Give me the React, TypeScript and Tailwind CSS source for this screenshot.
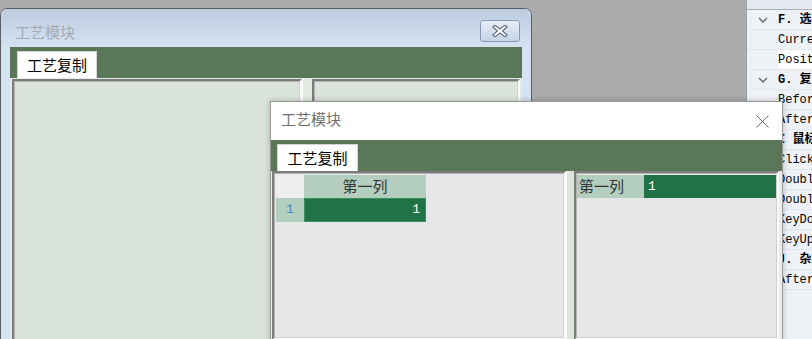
import React from 'react';

const cjk = { fontFamily: '"Noto Sans CJK SC", "Noto Sans", sans-serif' };
const mono = { fontFamily: '"Liberation Mono", "Noto Sans CJK SC", monospace' };

type PropRow = { label: string; group?: boolean; chevron?: boolean; white?: boolean };

const propRows: PropRow[] = [
    { label: 'F. 选择', group: true, chevron: true },
    { label: 'CurrentCell' },
    { label: 'Position', white: true },
    { label: 'G. 复制', group: true, chevron: true },
    { label: 'BeforeCopy' },
    { label: 'AfterCopy' },
    { label: 'I 鼠标', group: true, chevron: true },
    { label: 'Click' },
    { label: 'DoubleClick' },
    { label: 'DoubleClickCell' },
    { label: 'KeyDown' },
    { label: 'KeyUp' },
    { label: 'J. 杂项', group: true, chevron: true },
    { label: 'AfterEdit' },
];

const Chevron = () => (
    <svg width="10" height="6" viewBox="0 0 10 6">
        <path d="M1 1 L5 5 L9 1" fill="none" stroke="#5f6670" strokeWidth="1.4" />
    </svg>
);

const PropertyGrid = () => (
    <div className="absolute left-[746px] top-0 w-[66px] h-[339px] bg-[#eef2f7] border-l border-[#9aa0a8] flex flex-col overflow-hidden">
        <div className="h-[10px] shrink-0 border-b border-[#a9b1bc] bg-[#e4e9f0]" />
        {propRows.map((r, i) => (
            <div key={i} className={`h-5 shrink-0 flex items-center border-b border-[#e2e7ee] overflow-hidden ${r.white ? 'bg-white' : ''}`}>
                <div className="w-[31px] shrink-0 h-full flex items-center justify-center bg-[#eef2f7]">
                    {r.chevron && <Chevron />}
                </div>
                <span
                    className={`text-[12px] text-black whitespace-nowrap ${r.group ? 'font-bold' : ''}`}
                    style={mono}
                >
                    {r.label}
                </span>
            </div>
        ))}
    </div>
);

const SunkenPanel = ({ className, children }: { className: string; children?: React.ReactNode }) => (
    <div className={`border-2 border-t-[#7c7c7c] border-l-[#7c7c7c] border-r-[#fafafa] border-b-[#fafafa] ${className}`}>
        <div className="h-full border border-t-[#b4b4b4] border-l-[#b4b4b4] border-r-[#d0d0d0] border-b-[#d0d0d0]">
            {children}
        </div>
    </div>
);

const BackWindow = () => (
    <div className="absolute left-0 top-[8px] w-[532px] h-[345px] rounded-t-[7px] border border-[#5a5f66] bg-[#d6e3f3] flex flex-col overflow-hidden">
        <div className="h-[38px] shrink-0 bg-gradient-to-b from-[#bccbdf] to-[#d5e2f2] flex items-center justify-between pl-[14px] pr-[11px]">
            <span className="text-[15px] text-[#a3aab3] mt-[8px]" style={cjk}>工艺模块</span>
            <div className="w-[40px] h-[22px] rounded-[3px] border border-[#8899b3] bg-gradient-to-b from-[#e8eef7] to-[#c5d3e6] flex items-center justify-center mt-[5px]">
                <svg width="16" height="12" viewBox="0 0 16 12">
                    <path d="M3 2 L13 10 M13 2 L3 10" stroke="#44536a" strokeWidth="4" strokeLinecap="square" />
                    <path d="M3 2 L13 10 M13 2 L3 10" stroke="#ffffff" strokeWidth="2" strokeLinecap="square" />
                </svg>
            </div>
        </div>
        <div className="mx-[9px] flex-1 flex flex-col bg-[#dbe5dc]">
            <div className="h-[31px] bg-[#5a7858] flex items-end pl-[7px]">
                <div className="w-[80px] h-[27px] bg-white border border-[#d4d4d4] border-b-0 flex items-center justify-center text-[15px] text-black" style={cjk}>
                    工艺复制
                </div>
            </div>
            <div className="flex-1 flex pt-[1px] px-[2px] bg-[#e4ebe4]">
                <SunkenPanel className="w-[290px] bg-[#dae4db]" />
                <div className="w-[10px] bg-[#e2eae2] border-l border-white" />
                <SunkenPanel className="flex-1 bg-[#dae4db]" />
            </div>
        </div>
    </div>
);

const FrontWindow = () => (
    <div className="absolute left-[270px] top-[101px] w-[513px] h-[240px] border border-[#9a9a9a] bg-[#f0f0f0] flex flex-col shadow-[0_0_6px_rgba(0,0,0,0.25)]">
        <div className="h-[38px] shrink-0 bg-white flex items-center justify-between pl-[10px] pr-[13px]">
            <span className="text-[15px] text-[#707070] -mt-[3px]" style={cjk}>工艺模块</span>
            <svg width="13" height="13" viewBox="0 0 13 13">
                <path d="M0.5 0.5 L12.5 12.5 M12.5 0.5 L0.5 12.5" stroke="#6a6a6a" strokeWidth="1" />
            </svg>
        </div>
        <div className="h-[31px] shrink-0 bg-[#5a7858] flex items-end pl-[6px]">
            <div className="w-[81px] h-[27px] bg-white border border-[#d4d4d4] border-b-0 flex items-center justify-center text-[15px] text-black" style={cjk}>
                工艺复制
            </div>
        </div>
        <div className="flex-1 flex pl-[1px] pr-[3px] bg-[#e9ecea]">
            <SunkenPanel className="w-[294px] bg-[#e6e7e9]">
                <div className="pt-[1px] pl-[1px]">
                    <div className="flex h-[23px]">
                        <div className="w-[28px] bg-[#efefef]" />
                        <div className="w-[122px] bg-[#b3cdbe] flex items-center justify-center text-[15px] text-[#333]" style={cjk}>第一列</div>
                    </div>
                    <div className="flex h-[24px]">
                        <div className="w-[28px] bg-[#b3cdbe] flex items-center justify-center text-[13px] text-[#4a86c8]" style={mono}>1</div>
                        <div className="w-[122px] bg-[#217346] border border-[#3e8b5f] flex items-center justify-end pr-[5px] text-[13px] text-white" style={mono}>1</div>
                    </div>
                </div>
            </SunkenPanel>
            <div className="w-[8px] bg-[#dce6dc] border-l border-white" />
            <SunkenPanel className="flex-1 bg-[#e6e7e9]">
                <div className="pt-[1px] flex h-[24px]">
                    <div className="w-[67px] bg-[#b3cdbe] flex items-center pl-[2px] text-[15px] text-[#333]" style={cjk}>第一列</div>
                    <div className="flex-1 bg-[#217346] flex items-center pl-[4px] text-[13px] text-white" style={mono}>1</div>
                </div>
            </SunkenPanel>
        </div>
    </div>
);

const App = () => {
    return (
        <div className="relative w-[812px] h-[339px] overflow-hidden bg-[#ababab]">
            <PropertyGrid />
            <BackWindow />
            <FrontWindow />
        </div>
    );
};

export default App;
